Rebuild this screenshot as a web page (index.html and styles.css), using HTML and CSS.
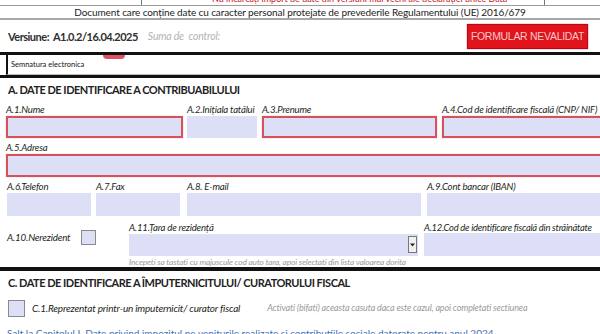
FILE: index.html
```html
<!DOCTYPE html>
<html lang="ro">
<head>
<meta charset="utf-8">
<title>Declarația unică</title>
<link rel="stylesheet" href="styles.css">
</head>
<body>
<div class="page">
  <div class="topbar">
    <div class="tb-cell tb-left"></div>
    <div class="tb-cell tb-mid"><span>Nu încărcați import de date din versiuni mai vechi ale declarației unice Data</span></div>
    <div class="tb-cell tb-right"></div>
  </div>
  <div class="docline">Document care conține date cu caracter personal protejate de prevederile Regulamentului (UE) 2016/679</div>
  <div class="version-row">
    <span class="version">Versiune:&nbsp; A1.0.2/16.04.2025</span>
    <span class="checksum">Suma de&nbsp; control:</span>
    <span class="status-btn">FORMULAR NEVALIDAT</span>
  </div>
  <div class="sig-block">
    <div class="sig-box">Semnatura electronica</div>
    <span class="sig-tag"></span>
  </div>

  <h2 class="section-title">A. DATE DE IDENTIFICARE A CONTRIBUABILULUI</h2>

  <div class="row row1">
    <div class="cell w-a1"><div class="lbl">A.1.Nume</div><div class="field req"></div></div>
    <div class="cell w-a2"><div class="lbl">A.2.Inițiala tatălui</div><div class="field"></div></div>
    <div class="cell w-a3"><div class="lbl">A.3.Prenume</div><div class="field req"></div></div>
    <div class="cell w-a4"><div class="lbl">A.4.Cod de identificare fiscală (CNP/ NIF)</div><div class="field req"></div></div>
  </div>

  <div class="row row2">
    <div class="cell w-full"><div class="lbl">A.5.Adresa</div><div class="field req tall"></div></div>
  </div>

  <div class="row row3">
    <div class="cell w-a6"><div class="lbl">A.6.Telefon</div><div class="field tall"></div></div>
    <div class="cell w-a7"><div class="lbl">A.7.Fax</div><div class="field tall"></div></div>
    <div class="cell w-a8"><div class="lbl">A.8. E-mail</div><div class="field tall"></div></div>
    <div class="cell w-a9"><div class="lbl">A.9.Cont bancar (IBAN)</div><div class="field tall"></div></div>
  </div>

  <div class="row row4">
    <div class="cell w-a10">
      <span class="lbl nr">A.10.Nerezident</span>
      <span class="checkbox"></span>
    </div>
    <div class="cell w-a11">
      <div class="lbl">A.11.Țara de rezidență</div>
      <div class="field select"><span class="dd-btn"><svg width="5" height="4" viewBox="0 0 5 4"><path d="M0 0.5H5L2.5 3.5Z" fill="#222"/></svg></span></div>
      <div class="hint">Incepeti sa tastati cu majuscule cod auto tara, apoi selectati din lista valoarea dorita</div>
    </div>
    <div class="cell w-a12">
      <div class="lbl">A.12.Cod de identificare fiscală din străinătate</div>
      <div class="field a12f"></div>
    </div>
  </div>

  <div class="thick-rule"></div>

  <h2 class="section-title c-title">C. DATE DE IDENTIFICARE A ÎMPUTERNICITULUI/ CURATORULUI FISCAL</h2>

  <div class="c1-row">
    <span class="checkbox big"></span>
    <span class="lbl c1">C.1.Reprezentat printr-un împuternicit/ curator fiscal</span>
    <span class="hint c1hint">Activati (bifati) aceasta casuta daca este cazul, apoi completati sectiunea</span>
  </div>

  <div class="salt">Salt la Capitolul I. Date privind impozitul pe veniturile realizate si contributiile sociale datorate pentru anul 2024</div>
</div>
</body>
</html>
```

FILE: styles.css
```css
* { box-sizing: border-box; }
html, body { margin: 0; padding: 0; background: #fff; }
body { width: 600px; height: 334px; overflow: hidden; font-family: Lato, "Open Sans", sans-serif; color: #231f20; }
.page { position: relative; width: 600px; }

.topbar { display: flex; height: 6px; border-bottom: 1px solid #9a9a9a; overflow: hidden; }
.tb-cell { height: 5px; overflow: hidden; }
.tb-left { width: 142px; border-right: 1px solid #777; }
.tb-mid { width: 403px; border-right: 1px solid #777; padding-left: 70px; }
.tb-mid span { display: block; margin-top: -6px; font-size: 9px; line-height: 10px; color: #c8151b; white-space: nowrap; }
.tb-right { flex: 1; }

.docline { height: 14px; border-bottom: 2px solid #a8a8a8; text-align: center; font-size: 10px; line-height: 13px; color: #222; white-space: nowrap; letter-spacing: -0.1px; }

.version-row { display: flex; align-items: center; height: 32px; padding-left: 8px; padding-right: 12px; }
.version { font-size: 11px; font-weight: 700; color: #2e2e2e; letter-spacing: -0.5px; }
.checksum { margin-left: 10px; font-size: 10.5px; font-style: italic; color: #b3b3b3; letter-spacing: -0.2px; }
.status-btn { margin-left: auto; width: 121px; height: 25px; background: #e1141b; border: 1px solid #b8080e; box-shadow: 0 0 1px #f06; color: #f5c9cb; font-family: "Liberation Sans", Arial, sans-serif; font-size: 10.5px; letter-spacing: -0.3px; display: flex; align-items: center; justify-content: center; }

.sig-block { position: relative; border-top: 3px solid #111; border-bottom: 3px solid #111; }
.sig-box { height: 20px; margin-left: 6px; border-left: 2px solid #111; border-bottom: 1px solid #bbb; padding-left: 3px; font-size: 7.5px; line-height: 20px; color: #111; }
.sig-tag { position: absolute; left: 103px; top: 0; width: 22px; height: 4px; background: #e05060; border-radius: 0 0 6px 6px; }

.section-title { margin: 0; padding: 4px 0 0 8px; height: 25px; font-size: 11px; line-height: 16px; font-weight: 700; color: #222; letter-spacing: -0.5px; white-space: nowrap; }

.row { display: flex; white-space: nowrap; }
.cell { flex: none; }
.lbl { font-size: 9.6px; font-style: italic; line-height: 13px; height: 13px; color: #231f20; letter-spacing: -0.2px; white-space: nowrap; }
.field { height: 22px; background: #dcdff6; }
.field.req { border: 2px solid #d4525c; box-shadow: 0 0 1px #f3a0a6; }
.field.tall { height: 23px; }

.row1 { padding-left: 6px; }
.w-a1 { width: 177px; }
.w-a2 { width: 70px; margin-left: 4px; }
.w-a3 { width: 175px; margin-left: 5px; }
.w-a4 { width: 170px; margin-left: 5px; }

.row2 { padding-left: 6px; margin-top: 3px; }
.w-full { width: 600px; }

.row3 { padding-left: 7px; margin-top: 3px; }
.row3 .lbl { height: 13px; }
.w-a6 { width: 84px; }
.w-a7 { width: 84px; margin-left: 5px; }
.w-a8 { width: 234px; margin-left: 7px; }
.w-a9 { width: 180px; margin-left: 6px; }

.row4 { padding-left: 7px; height: 51px; padding-top: 5px; }
.w-a10 { width: 122px; display: flex; align-items: center; height: 32px; }
.lbl.nr { font-size: 9.8px; height: auto; }
.checkbox { display: inline-block; width: 15px; height: 15px; border: 1px solid #8a8a8a; background: #dcdff6; margin-left: 11px; }
.w-a11 { width: 289px; }
.field.select { position: relative; }
.dd-btn { position: absolute; right: 1px; top: 2px; width: 9px; height: 17px; background: #f0f0f0; border: 1px solid #777; display: flex; align-items: center; justify-content: center; }
.hint { font-size: 8.4px; font-style: italic; color: #9a9a9a; line-height: 12px; letter-spacing: -0.15px; white-space: nowrap; }
.w-a12 { width: 176px; margin-left: 6px; }
.w-a12 .lbl { font-size: 9.4px; letter-spacing: -0.25px; }
.a12f { height: 23px; margin-top: -1px; }

.thick-rule { height: 4px; background: #111; }

.c-title { height: 27px; padding-top: 4px; }
.c1-row { display: flex; align-items: center; height: 20px; padding-left: 8px; white-space: nowrap; }
.checkbox.big { width: 17px; height: 17px; margin-left: 0; }
.lbl.c1 { height: auto; margin-left: 7px; font-size: 10px; }
.c1hint { margin-left: 27px; font-size: 9px; }

.salt { margin-top: 9px; padding-left: 7px; font-size: 10px; color: #3f6fb5; white-space: nowrap; }
```
